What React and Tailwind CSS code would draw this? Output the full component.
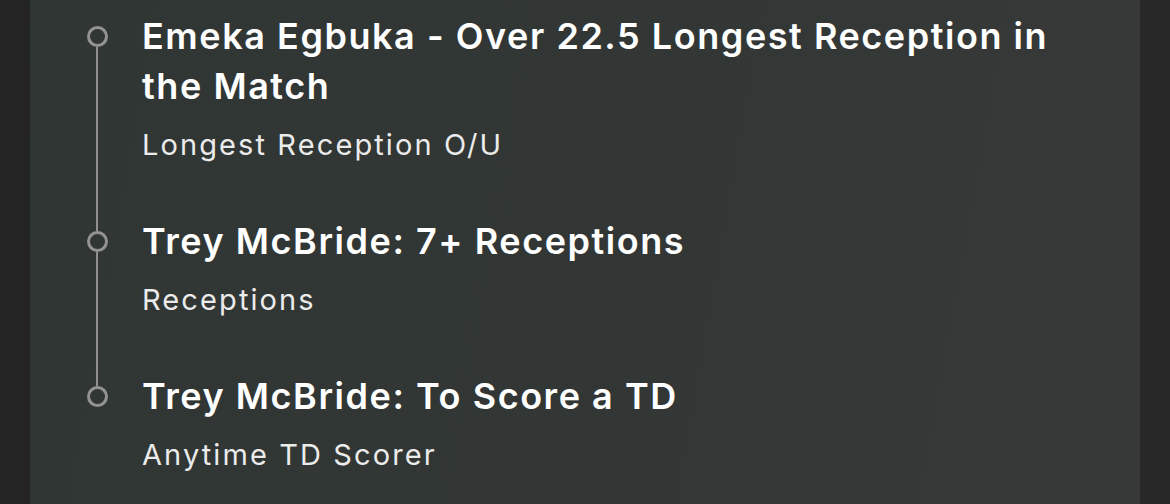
const legs = [
  {
    title: 'Emeka Egbuka - Over 22.5 Longest Reception in the Match',
    market: 'Longest Reception O/U',
  },
  { title: 'Trey McBride: 7+ Receptions', market: 'Receptions' },
  { title: 'Trey McBride: To Score a TD', market: 'Anytime TD Scorer' },
]

export default function App() {
  return (
    <div className="flex h-[504px] w-full bg-[linear-gradient(90deg,#242424,#282828)] px-[30px] font-['Inter','Liberation_Sans',sans-serif] overflow-hidden">
      <div className="flex-1 bg-[linear-gradient(100deg,#303634_0%,#323735_55%,#373938_100%)] pl-[57px] pt-[11px]">
        {legs.map((leg, idx) => {
          const first = idx === 0
          const last = idx === legs.length - 1
          return (
            <div key={leg.title} className="flex">
              {/* timeline rail */}
              <div className="flex w-[20px] flex-col items-center">
                <div className={`h-[15px] w-[2px] ${first ? '' : 'bg-[#8f8f8f]'}`} />
                <div className="size-[21px] rounded-full border-[3px] border-[#939393]" />
                <div className={`w-[2px] flex-1 ${last ? '' : 'bg-[#8f8f8f]'}`} />
              </div>
              <div className={`ml-[35px] w-[950px] ${last ? '' : 'pb-[51px]'}`}>
                <h3 className="text-[36px] font-semibold leading-[50px] tracking-[1.55px] text-white">
                  {leg.title}
                </h3>
                <p className="mt-[14px] text-[29px] leading-[40px] tracking-[2.1px] text-[#ebebeb]">
                  {leg.market}
                </p>
              </div>
            </div>
          )
        })}
      </div>
    </div>
  )
}
